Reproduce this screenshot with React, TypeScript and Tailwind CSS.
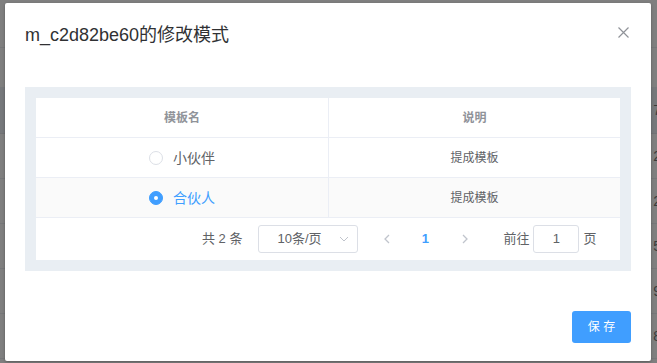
import React from "react";

const font = { fontFamily: '"Liberation Sans", "Noto Sans CJK SC", sans-serif' };

function Radio({ checked, label }: { checked: boolean; label: string }) {
  return (
    <div className="flex items-center">
      {checked ? (
        <span className="w-[14px] h-[14px] rounded-full bg-[#409eff] border border-[#409eff] flex items-center justify-center">
          <span className="w-[4px] h-[4px] rounded-full bg-white" />
        </span>
      ) : (
        <span className="w-[14px] h-[14px] rounded-full bg-white border border-[#dcdfe6]" />
      )}
      <span className={`pl-[10px] text-[14px] leading-[14px] ${checked ? "text-[#409eff]" : "text-[#606266]"}`}>{label}</span>
    </div>
  );
}

export default function App() {
  const bgRows = ["7", "2", "2", "5", "9", "8"];
  return (
    <div className="relative w-[657px] h-[363px] overflow-hidden bg-[#7f7f7f]" style={font}>
      {/* underlying page (dimmed) */}
      <div className="flex flex-col">
        <div className="h-[48px] border-b border-[#767779]" />
        <div className="h-[39px]" />
        <div className="h-[47px] bg-[#76787b] border-b border-[#717275] flex items-center justify-end pr-0">
          <span className="text-[14px] text-[#3a3a3a] mr-[-4px]">{bgRows[0]}</span>
        </div>
        {bgRows.slice(1).map((d, i) => (
          <div key={i} className="h-[45px] border-b border-[#767779] flex items-center justify-end">
            <span className="text-[14px] text-[#3a3a3a] mr-[-4px]">{d}</span>
          </div>
        ))}
      </div>

      {/* dialog */}
      <div className="absolute left-[5px] top-[3px] w-[646px] h-[358px] bg-white rounded-[2px] shadow-[0_1px_3px_rgba(0,0,0,0.3)] flex flex-col">
        <div className="relative pt-[20px] px-[20px] pb-[10px]">
          <div className="text-[18px] leading-[24px] text-[#303133]">m_c2d82be60的修改模式</div>
          <svg className="absolute left-[613px] top-[24px]" width="11" height="11" viewBox="0 0 11 11">
            <path d="M0.5 0.5 L10.5 10.5 M10.5 0.5 L0.5 10.5" stroke="#909399" strokeWidth="1.2" fill="none" />
          </svg>
        </div>
        <div className="px-[20px] py-[30px]">
          <div className="bg-[#e9eef3] p-[11px]">
            <div className="bg-white">
              {/* header */}
              <div className="grid grid-cols-[293px_291px] h-[40px] border-b border-[#ebeef5]">
                <div className="flex items-center justify-center border-r border-[#ebeef5] text-[12px] font-bold text-[#909399]">模板名</div>
                <div className="flex items-center justify-center text-[12px] font-bold text-[#909399]">说明</div>
              </div>
              <div className="grid grid-cols-[293px_291px] h-[40px] border-b border-[#ebeef5]">
                <div className="flex items-center justify-center border-r border-[#ebeef5]">
                  <Radio checked={false} label="小伙伴" />
                </div>
                <div className="flex items-center justify-center text-[12px] text-[#606266]">提成模板</div>
              </div>
              <div className="grid grid-cols-[293px_291px] h-[40px] border-b border-[#ebeef5] bg-[#fafafa]">
                <div className="flex items-center justify-center border-r border-[#ebeef5]">
                  <Radio checked={true} label="合伙人" />
                </div>
                <div className="flex items-center justify-center text-[12px] text-[#606266]">提成模板</div>
              </div>
              {/* pagination */}
              <div className="h-[42px] flex items-center text-[13px] text-[#606266]">
                <span className="ml-[166px]">共 2 条</span>
                <div className="ml-[16px] w-[100px] h-[28px] border border-[#dcdfe6] rounded-[3px] flex items-center pl-[18px] pr-[8px] justify-between">
                  <span>10条/页</span>
                  <svg width="10" height="6" viewBox="0 0 10 6">
                    <path d="M1 1 L5 5 L9 1" stroke="#c0c4cc" strokeWidth="1" fill="none" />
                  </svg>
                </div>
                <div className="ml-[11px] w-[36px] h-[28px] flex items-center justify-center">
                  <svg width="6" height="10" viewBox="0 0 6 10">
                    <path d="M5 1 L1 5 L5 9" stroke="#c0c4cc" strokeWidth="1.3" fill="none" />
                  </svg>
                </div>
                <div className="w-[40px] h-[28px] flex items-center justify-center text-[#409eff] font-bold">1</div>
                <div className="w-[40px] h-[28px] flex items-center justify-center">
                  <svg width="6" height="10" viewBox="0 0 6 10">
                    <path d="M1 1 L5 5 L1 9" stroke="#c0c4cc" strokeWidth="1.3" fill="none" />
                  </svg>
                </div>
                <span className="ml-[18px]">前往</span>
                <div className="ml-[4px] w-[46px] h-[28px] border border-[#dcdfe6] rounded-[3px] flex items-center justify-center">1</div>
                <span className="ml-[4px]">页</span>
              </div>
            </div>
          </div>
        </div>
        <div className="flex justify-end px-[20px] pt-[10px]">
          <button className="w-[59px] h-[32px] bg-[#409eff] rounded-[3px] text-white text-[12px] flex items-center justify-center">保 存</button>
        </div>
      </div>
    </div>
  );
}
